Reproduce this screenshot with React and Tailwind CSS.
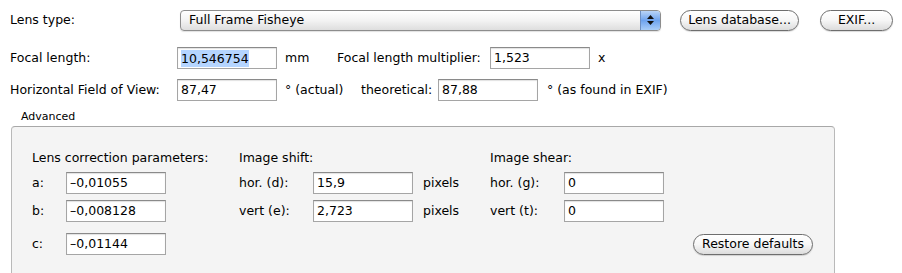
import React from "react";

const font = { fontFamily: '"Lucida Grande", "DejaVu Sans", sans-serif' };

function Field({ value, w = "w-[100px]", selected }) {
  return (
    <div
      className={`${w} h-[22px] bg-white border border-[#a5a5a5] border-t-[#8a8a8a] shadow-[inset_0_1px_1px_rgba(0,0,0,0.12)] flex items-center px-[3px] text-[12.5px] text-black`}
    >
      {selected ? <span className="bg-[#b5d5ff] leading-[17px]">{value}</span> : value}
    </div>
  );
}

function PillButton({ children, w }) {
  return (
    <button
      className={`${w} h-[21px] rounded-full border border-[#6e6e6e] bg-gradient-to-b from-white via-[#f6f6f6] to-[#dcdcdc] text-[12.5px] text-black flex items-center justify-center shadow-[0_1px_1px_rgba(0,0,0,0.15)]`}
    >
      {children}
    </button>
  );
}

export default function App() {
  return (
    <div className="w-[902px] h-[273px] bg-white overflow-hidden text-[12.5px] text-black" style={font}>
      {/* lens type */}
      <div className="flex items-center pt-[9px] pl-[10px] h-[31px]">
        <span className="w-[170px]">Lens type:</span>
        <div className="w-[481px] h-[21px] rounded-[4px] border border-[#8d8d8d] bg-gradient-to-b from-white via-[#f3f3f3] to-[#dedede] flex items-center justify-between overflow-hidden shadow-[0_1px_1px_rgba(0,0,0,0.12)]">
          <span className="pl-[8px]">Full Frame Fisheye</span>
          <span className="w-[20px] h-full bg-gradient-to-b from-[#b9d4f7] via-[#6ea3ee] to-[#a9cdf8] border-l border-[#6d8fc2] flex flex-col items-center justify-center gap-[2px]">
            <svg width="7" height="4" viewBox="0 0 7 4"><path d="M3.5 0 L7 4 L0 4 Z" fill="#111" /></svg>
            <svg width="7" height="4" viewBox="0 0 7 4"><path d="M0 0 L7 0 L3.5 4 Z" fill="#111" /></svg>
          </span>
        </div>
        <div className="ml-[19px]">
          <PillButton w="w-[119px]">Lens database...</PillButton>
        </div>
        <div className="ml-[21px]">
          <PillButton w="w-[73px]">EXIF...</PillButton>
        </div>
      </div>

      {/* focal length */}
      <div className="flex items-center pl-[10px] mt-[16px]">
        <span className="w-[167px]">Focal length:</span>
        <Field value="10,546754" selected />
        <span className="ml-[8px] w-[52px]">mm</span>
        <span className="w-[153px]">Focal length multiplier:</span>
        <Field value="1,523" />
        <span className="ml-[8px]">x</span>
      </div>

      {/* hfov */}
      <div className="flex items-center pl-[10px] mt-[10px]">
        <span className="w-[167px]">Horizontal Field of View:</span>
        <Field value="87,47" />
        <span className="ml-[8px] w-[76px]">° (actual)</span>
        <span className="w-[77px]">theoretical:</span>
        <Field value="87,88" />
        <span className="ml-[9px]">° (as found in EXIF)</span>
      </div>

      {/* advanced group */}
      <div className="pl-[21px] mt-[9px] text-[11px] leading-[14px]">Advanced</div>
      <div className="ml-[11px] mt-[2px] w-[824px] h-[160px] rounded-[4px] border border-[#b9b9b9] border-t-[#a8a8a8] bg-[#f4f4f4] pt-[23px] pl-[20px]">
        <div className="grid grid-cols-[207px_251px_auto] leading-[16px]">
          <div>Lens correction parameters:</div>
          <div>Image shift:</div>
          <div>Image shear:</div>
        </div>

        <div className="grid grid-cols-[207px_251px_auto] mt-[6px] items-center">
          <div className="flex items-center">
            <span className="w-[34px]">a:</span>
            <Field value="–0,01055" />
          </div>
          <div className="flex items-center">
            <span className="w-[74px]">hor. (d):</span>
            <Field value="15,9" />
            <span className="ml-[10px]">pixels</span>
          </div>
          <div className="flex items-center">
            <span className="w-[74px]">hor. (g):</span>
            <Field value="0" />
          </div>
        </div>

        <div className="grid grid-cols-[207px_251px_auto] mt-[6px] items-center">
          <div className="flex items-center">
            <span className="w-[34px]">b:</span>
            <Field value="–0,008128" />
          </div>
          <div className="flex items-center">
            <span className="w-[74px]">vert (e):</span>
            <Field value="2,723" />
            <span className="ml-[10px]">pixels</span>
          </div>
          <div className="flex items-center">
            <span className="w-[74px]">vert (t):</span>
            <Field value="0" />
          </div>
        </div>

        <div className="flex items-center mt-[11px]">
          <span className="w-[34px]">c:</span>
          <Field value="–0,01144" />
          <div className="ml-[527px]">
            <PillButton w="w-[120px]">Restore defaults</PillButton>
          </div>
        </div>
      </div>
    </div>
  );
}
